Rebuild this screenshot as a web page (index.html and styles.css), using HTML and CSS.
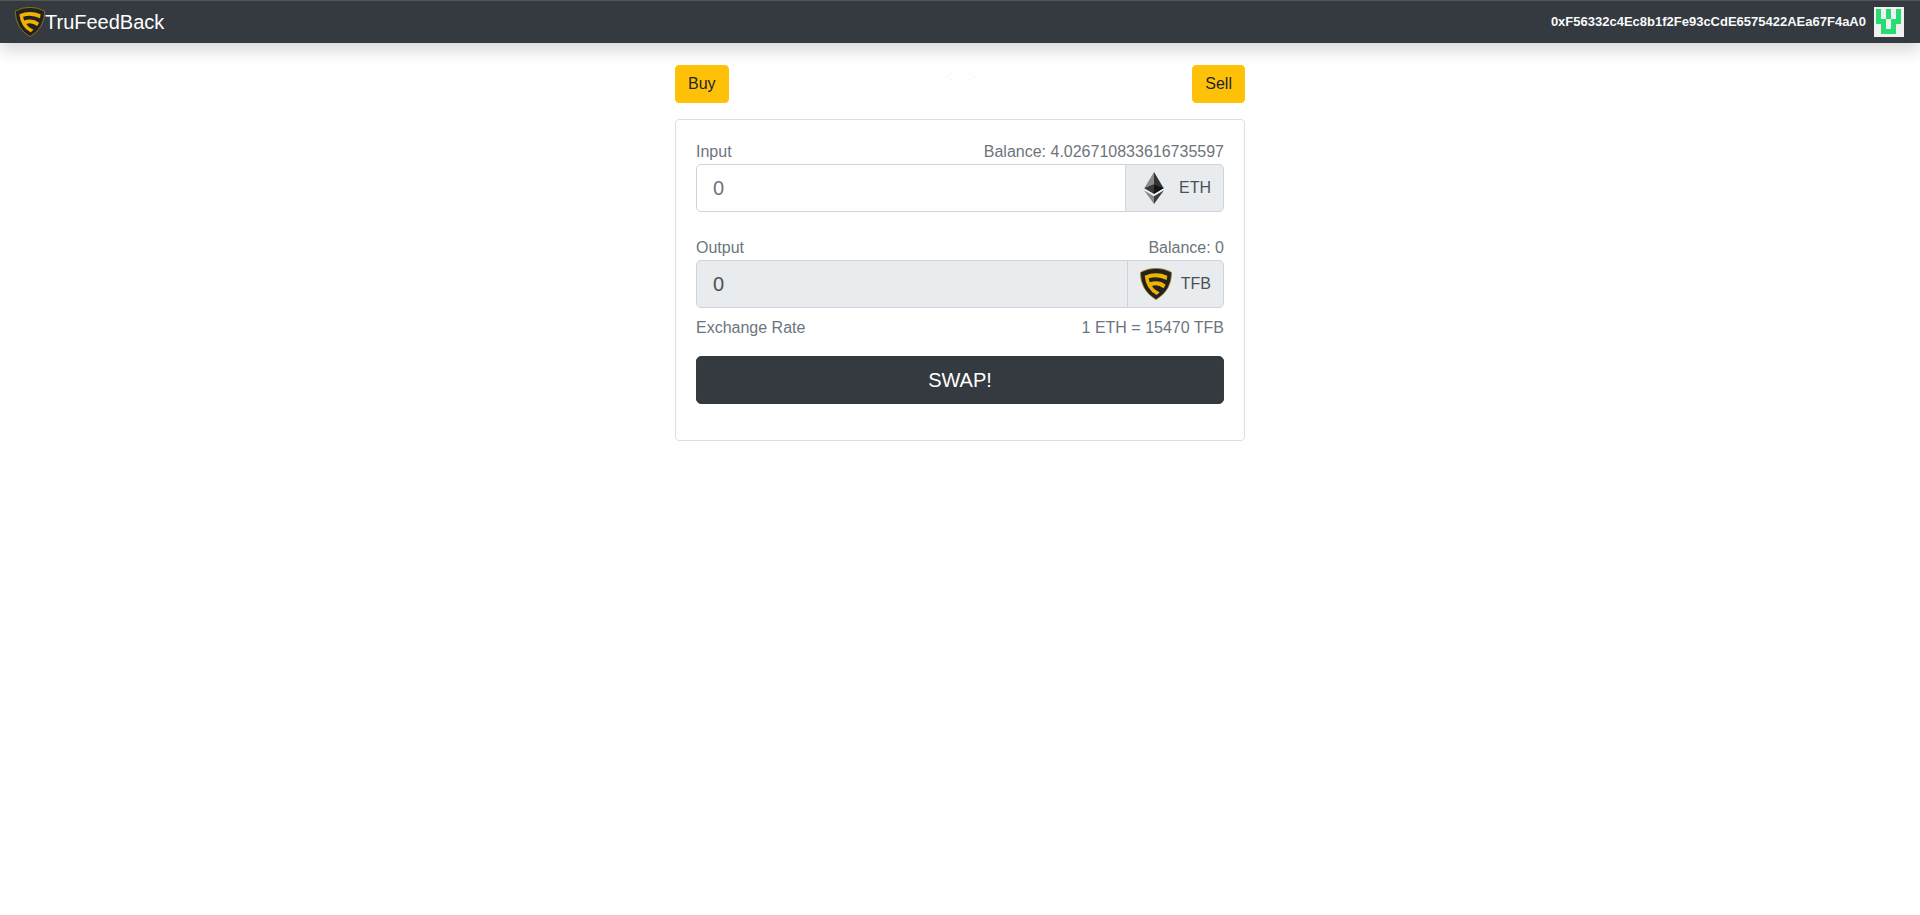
FILE: index.html
```html
<!DOCTYPE html>
<html lang="en">
<head>
    <meta charset="utf-8">
    <meta name="viewport" content="width=device-width, initial-scale=1">
    <title>TruFeedBack</title>
    <link rel="stylesheet" href="styles.css">
</head>
<body>
    <!-- Shared shield logo -->
    <svg class="symbols" aria-hidden="true">
        <symbol id="shield" viewBox="0 0 96 96">
            <path d="M48 1Q73 1 95 13Q95 68 48 95Q1 68 1 13Q23 1 48 1Z" fill="#222" stroke="#c99a12" stroke-width="2"/>
            <path d="M14 23Q48 9 82 23L80 36Q54 23 26 31L29 43Q57 34 77 50L71 61Q53 48 36 54Q43 66 59 73L50 81Q18 64 14 23Z" fill="#f0b400"/>
        </symbol>
    </svg>

    <nav class="navbar">
        <a class="navbar-brand" href="#">
            <svg class="brand-logo" aria-hidden="true"><use href="#shield"/></svg>
            <span>TruFeedBack</span>
        </a>
        <div class="account">
            <small class="account-address">0xF56332c4Ec8b1f2Fe93cCdE6575422AEa67F4aA0</small>
            <!-- Identicon -->
            <svg class="identicon" viewBox="0 0 30 30" shape-rendering="crispEdges" aria-hidden="true">
                <path d="M0 0H30V30H0Z" fill="#f0f0f0"/>
                <path d="M2 2H7V12H12V2H17V12H22V2H27V17H22V27H7V17H2Z" fill="#26dc73"/>
                <path d="M12 12H17V22H12Z" fill="#f0f0f0"/>
            </svg>
        </div>
    </nav>

    <main class="content">
        <div class="tabs">
            <button type="button" class="btn btn-warning">Buy</button>
            <span class="arrows">&lt; &nbsp; &gt;</span>
            <button type="button" class="btn btn-warning">Sell</button>
        </div>

        <div class="card">
            <form class="swap-form">
                <div class="row">
                    <label for="input-amount">Input</label>
                    <span>Balance: 4.026710833616735597</span>
                </div>
                <div class="input-group input-group-first">
                    <input type="text" id="input-amount" class="form-control" placeholder="0">
                    <div class="input-addon">
                        <svg class="token-icon" viewBox="0 0 96 96" aria-hidden="true">
                            <path d="M48 0L18 50L48 37Z" fill="#8a8a8a"/>
                            <path d="M48 0L78 50L48 37Z" fill="#343434"/>
                            <path d="M48 36L18 49L48 67Z" fill="#393939"/>
                            <path d="M48 36L78 49L48 67Z" fill="#141414"/>
                            <path d="M18 49L48 67L78 49L78 55L48 73L18 55Z" fill="#f4f4f4"/>
                            <path d="M18 55L48 73V96Z" fill="#8a8a8a"/>
                            <path d="M78 55L48 73V96Z" fill="#3c3c3b"/>
                        </svg>
                        <span>ETH</span>
                    </div>
                </div>

                <div class="row">
                    <label for="output-amount">Output</label>
                    <span>Balance: 0</span>
                </div>
                <div class="input-group">
                    <input type="text" id="output-amount" class="form-control" value="0" disabled>
                    <div class="input-addon">
                        <svg class="token-icon" aria-hidden="true"><use href="#shield"/></svg>
                        <span>TFB</span>
                    </div>
                </div>

                <div class="row rate">
                    <span>Exchange Rate</span>
                    <span>1 ETH = 15470 TFB</span>
                </div>
                <button type="submit" class="btn btn-swap">SWAP!</button>
            </form>
        </div>
    </main>
</body>
</html>
```

FILE: styles.css
```css
* {
    box-sizing: border-box;
}

body {
    margin: 0;
    font-family: "Liberation Sans", Arial, sans-serif;
    font-size: 16px;
    line-height: 24px;
    color: #212529;
    background: #fff;
}

.symbols {
    display: none;
}

/* Navbar */
.navbar {
    display: flex;
    align-items: center;
    justify-content: space-between;
    padding: 6px 16px 6px 15px;
    border-top: 1px solid #555;
    background: #343a40;
    box-shadow: 0 8px 16px rgba(0, 0, 0, 0.15);
}

.navbar-brand {
    display: flex;
    align-items: center;
    color: #fff;
    font-size: 20px;
    line-height: 28px;
    text-decoration: none;
}

.brand-logo {
    width: 30px;
    height: 30px;
}

.account {
    display: flex;
    align-items: center;
    gap: 8px;
    height: 30px;
}

.account-address {
    color: #f8f9fa;
    font-size: 13px;
    font-weight: bold;
}

.identicon {
    width: 30px;
    height: 30px;
}

/* Swap panel */
.content {
    max-width: 570px;
    margin: 22px auto 0;
}

.tabs {
    display: flex;
    justify-content: space-between;
    align-items: flex-start;
    margin-bottom: 16px;
}

.arrows {
    color: #f8f9fa;
}

.btn {
    padding: 6px 12px;
    border: 1px solid transparent;
    border-radius: 4px;
    font-family: inherit;
    font-size: 16px;
    line-height: 24px;
    cursor: pointer;
}

.btn-warning {
    color: #212529;
    background: #ffc107;
    border-color: #ffc107;
}

.card {
    padding: 20px;
    border: 1px solid #dfdfdf;
    border-radius: 4px;
}

.swap-form {
    margin-bottom: 16px;
}

.row {
    display: flex;
    justify-content: space-between;
    color: #6c757d;
}

.input-group {
    display: flex;
    height: 48px;
    margin-bottom: 8px;
}

.input-group-first {
    margin-bottom: 24px;
}

.form-control {
    flex: 1;
    min-width: 0;
    padding: 8px 16px;
    border: 1px solid #ced4da;
    border-radius: 5px 0 0 5px;
    font-family: inherit;
    font-size: 20px;
    color: #495057;
    background: #fff;
}

.form-control::placeholder {
    color: #6c757d;
}

.form-control:disabled {
    background: #e9ecef;
}

.input-addon {
    display: flex;
    align-items: center;
    gap: 9px;
    margin-left: -1px;
    padding: 0 12px;
    border: 1px solid #ced4da;
    border-radius: 0 5px 5px 0;
    color: #495057;
    background: #e9ecef;
}

.token-icon {
    width: 32px;
    height: 32px;
}

.rate {
    margin-bottom: 16px;
}

.btn-swap {
    display: block;
    width: 100%;
    height: 48px;
    border-radius: 5px;
    border-color: #343a40;
    font-size: 20px;
    color: #fff;
    background: #343a40;
}
```
